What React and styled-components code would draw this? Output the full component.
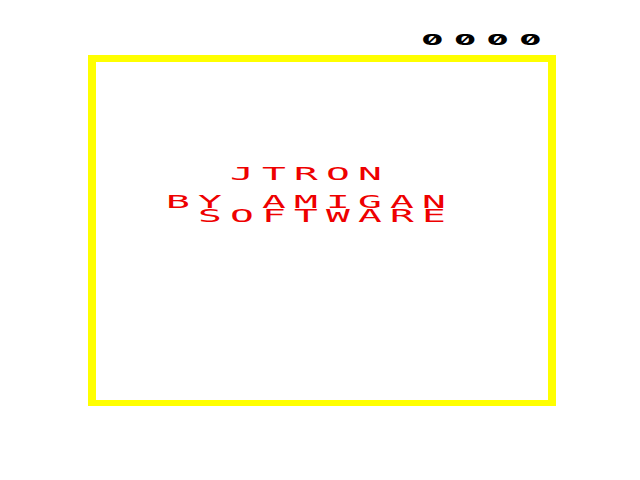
import React from "react";
import styled, { createGlobalStyle } from "styled-components";

const Global = createGlobalStyle`
  html, body { margin: 0; padding: 0; background: #ffffff; }
  body { width: 640px; height: 480px; overflow: hidden; }
`;

const Screen = styled.div`
  width: 640px;
  height: 480px;
  display: flex;
  flex-direction: column;
  align-items: flex-start;
  padding: 33px 0 0 88px;
  box-sizing: border-box;
  overflow: hidden;
`;

const ScoreBar = styled.div`
  height: 22px;
  padding-left: 334px;
  display: flex;
  align-items: flex-start;
`;

const Score = styled.div`
  font-family: "Inter", "DejaVu Sans", sans-serif;
  font-weight: 800;
  font-size: 14px;
  line-height: 14px;
  color: #000;
  font-feature-settings: "zero" 1, "tnum" 1;
  letter-spacing: 5.17px;
  white-space: pre;
  transform: scaleX(2.3);
  transform-origin: left top;
`;

const Frame = styled.div`
  width: 468px;
  height: 351px;
  box-sizing: border-box;
  border-style: solid;
  border-color: #ffff00;
  border-width: 7px 8px 6px 8px;
  display: flex;
  flex-direction: column;
  align-items: flex-start;
  padding: 105px 0 0 70px;
`;

const Line = styled.div`
  font-family: "DejaVu Sans Mono", monospace;
  font-size: 18px;
  line-height: 14px;
  height: 14px;
  color: #ee0000;
  letter-spacing: 3.71px;
  white-space: pre;
  transform: scaleX(2.2);
  transform-origin: left top;
  margin-top: ${(p) => p.$gap || 0}px;
`;

export default function App() {
  return (
    <>
      <Global />
      <Screen>
        <ScoreBar>
          <Score>0000</Score>
        </ScoreBar>
        <Frame>
          <Line>{"  JTRON"}</Line>
          <Line $gap={14}>{"BY AMIGAN"}</Line>
          <Line>{" SOFTWARE"}</Line>
        </Frame>
      </Screen>
    </>
  );
}
